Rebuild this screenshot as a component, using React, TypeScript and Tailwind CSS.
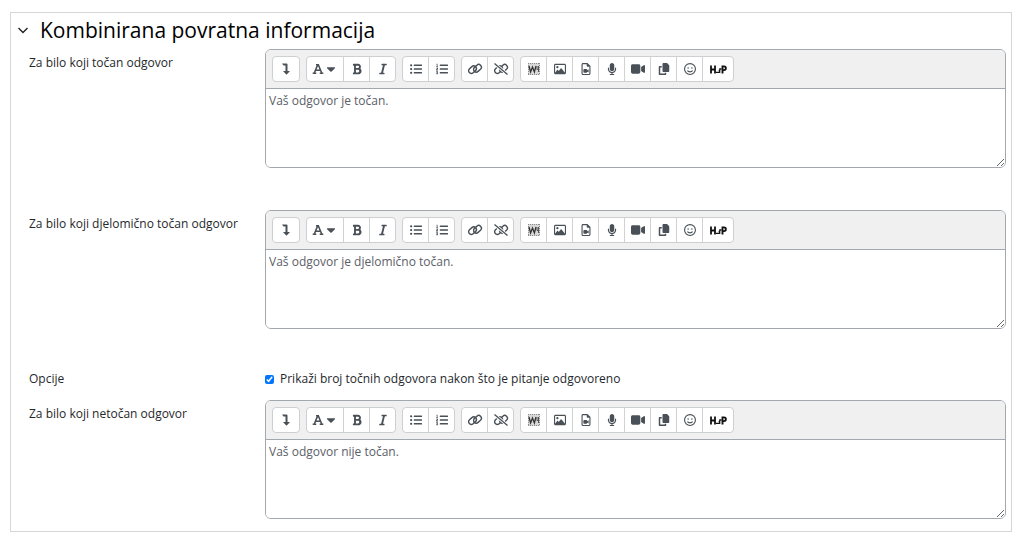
import { useState } from "react";
import type { ReactNode } from "react";
import { FaBold, FaCaretDown, FaItalic, FaListOl, FaListUl } from "react-icons/fa";
import { FaCopy, FaMicrophone, FaRegFaceSmile, FaRegFileVideo, FaRegImage, FaVideo } from "react-icons/fa6";

interface Tool {
	label: string;
	icon: ReactNode;
	width?: string;
}

function ExpandIcon() {
	return (
		<svg viewBox="0 0 10 12" className="h-3 w-2.5" fill="currentColor" aria-hidden="true">
			<path d="M1 .5h4.500q1 0 1 1V8h2.500L5.500 11.700 2 8h2.500V2.500H2.500z" />
		</svg>
	);
}

function FontIcon() {
	return (
		<svg viewBox="0 0 12 12" className="size-3" fill="none" stroke="currentColor" aria-hidden="true">
			<path d="M2.300 10L5.700 1.800h.6L9.700 10M3.800 7.300h4.500" strokeWidth="1.600" />
			<path d="M.7 10.200h3.600M7.700 10.200h3.600M4 1.800h2.500" strokeWidth="1.400" />
		</svg>
	);
}

function ChainIcon({ broken = false }: { broken?: boolean }) {
	return (
		<svg viewBox="0 0 16 12" className="h-3 w-4" fill="none" stroke="currentColor" aria-hidden="true">
			<g strokeWidth="1.400">
				<rect x="1.200" y="4" width="8.600" height="5.400" rx="2.700" transform="rotate(-42 5.500 6.700)" />
				<rect x="6.200" y="2.600" width="8.600" height="5.400" rx="2.700" transform="rotate(-42 10.500 5.300)" />
			</g>
			{broken && (
				<>
					<path d="M1.500 .5l13 11" stroke="#fff" strokeWidth="3" />
					<path d="M1.500 .5l13 11" strokeWidth="1.300" />
				</>
			)}
		</svg>
	);
}

function WordIcon() {
	return (
		<svg viewBox="0 0 12 12" className="size-3" aria-hidden="true">
			<rect width="12" height="12" fill="#d8d8d8" />
			<path d="M0 .5h12M0 11.5h12M.5 0v12M11.5 0v12" stroke="#8d8d8d" strokeDasharray="1 1" />
			<path d="M1 3l1.600 6 1.900-5 1.900 5L8 3" fill="none" stroke="#333" strokeWidth="1.300" />
			<path d="M9 3v3.500h2M10.500 3v6" fill="none" stroke="#555" />
		</svg>
	);
}

function H5pIcon() {
	return (
		<svg viewBox="0 0 18 10" className="h-2.5 w-[18px]" aria-hidden="true">
			<g fill="none" stroke="#111">
				<path d="M2 1.500v8M6 1.500v8M2 5.500h4" strokeWidth="1.800" />
				<path d="M13.500 9.500V2.400h1.500a1.700 1.700 0 0 1 0 3.700h-2" strokeWidth="1.900" />
				<path d="M12.500 5H10.200M9.700 6.500h1v1.800H7" strokeWidth="1.300" />
			</g>
		</svg>
	);
}

const toolGroups: Tool[][] = [
	[{ label: "Prikaži više gumba", icon: <ExpandIcon />, width: "w-[26px]" }],
	[
		{
			label: "Stilovi odlomka",
			icon: (
				<>
					<FontIcon />
					<FaCaretDown className="text-sm" />
				</>
			),
			width: "w-[37px]",
		},
		{ label: "Podebljano", icon: <FaBold /> },
		{ label: "Kurziv", icon: <FaItalic />, width: "w-[25px]" },
	],
	[
		{ label: "Nenumerirani popis", icon: <FaListUl /> },
		{ label: "Numerirani popis", icon: <FaListOl />, width: "w-[25px]" },
	],
	[
		{ label: "Poveznica", icon: <ChainIcon /> },
		{ label: "Ukloni poveznicu", icon: <ChainIcon broken />, width: "w-[25px]" },
	],
	[
		{ label: "Uvezi Word datoteku", icon: <WordIcon /> },
		{ label: "Umetni sliku", icon: <FaRegImage /> },
		{ label: "Umetni medij", icon: <FaRegFileVideo /> },
		{ label: "Snimi zvuk", icon: <FaMicrophone /> },
		{ label: "Snimi video", icon: <FaVideo className="text-sm" /> },
		{ label: "Upravljanje datotekama", icon: <FaCopy /> },
		{ label: "Emotikoni", icon: <FaRegFaceSmile /> },
		{ label: "Umetni H5P", icon: <H5pIcon />, width: "w-[30px]" },
	],
];

function Toolbar() {
	return (
		<div role="toolbar" className="flex gap-1.5 border-b border-[#a3a8ae] bg-[#f0f0f0] p-1.5">
			{toolGroups.map((group) => (
				<div
					key={group[0].label}
					className="flex divide-x divide-[#d0d2d4] overflow-hidden rounded border border-[#cdcfd1] bg-white"
				>
					{group.map((tool) => (
						<button
							key={tool.label}
							type="button"
							title={tool.label}
							aria-label={tool.label}
							className={`flex h-6 items-center justify-center text-xs text-[#495057] hover:bg-gray-100 ${tool.width ?? "w-[26px]"}`}
						>
							{tool.icon}
						</button>
					))}
				</div>
			))}
		</div>
	);
}

interface FeedbackRowProps {
	id: string;
	label: string;
	text: string;
}

function FeedbackRow({ id, label, text }: FeedbackRowProps) {
	return (
		<div className="flex">
			<label htmlFor={id} className="w-[236px] shrink-0 pt-1.5">
				{label}
			</label>
			<div className="min-w-0 flex-1 overflow-hidden rounded-md border border-[#a3a8ae]">
				<Toolbar />
				<textarea
					id={id}
					defaultValue={text}
					className="block h-[78px] w-full resize-y bg-white px-[3px] py-1 text-[#5b6067] outline-none"
				/>
			</div>
		</div>
	);
}

export default function App() {
	const [open, setOpen] = useState(true);

	return (
		<main className="px-2.5 py-3 pr-3 font-['Open_Sans','Noto_Sans',sans-serif] text-xs leading-4 text-[#25282b]">
			<section className="border border-[#d6d6d6] pt-[3px] pr-[5px] pb-3 pl-[18px]">
				<h2 className="-ml-3 text-[21px] leading-7 text-black">
					<button
						type="button"
						aria-expanded={open}
						onClick={() => setOpen(!open)}
						className="flex items-center gap-[11px]"
					>
						<svg viewBox="0 0 12 12" className={open ? "size-3" : "size-3 -rotate-90"} aria-hidden="true">
							<path d="M1.500 4l4.500 4.500L10.500 4" fill="none" stroke="#222" strokeWidth="1.400" />
						</svg>
						Kombinirana povratna informacija
					</button>
				</h2>

				{open && (
					<div className="pt-[5px]">
						<FeedbackRow id="correct" label="Za bilo koji točan odgovor" text="Vaš odgovor je točan." />
						<div className="pt-[42px]">
							<FeedbackRow
								id="partial"
								label="Za bilo koji djelomično točan odgovor"
								text="Vaš odgovor je djelomično točan."
							/>
						</div>
						<div className="flex pt-[42px] pb-[13px]">
							<span className="w-[236px] shrink-0">Opcije</span>
							<label className="flex items-center gap-1.5">
								<input type="checkbox" defaultChecked className="size-[9px] accent-[#0075ff]" />
								Prikaži broj točnih odgovora nakon što je pitanje odgovoreno
							</label>
						</div>
						<FeedbackRow id="incorrect" label="Za bilo koji netočan odgovor" text="Vaš odgovor nije točan." />
					</div>
				)}
			</section>
		</main>
	);
}
